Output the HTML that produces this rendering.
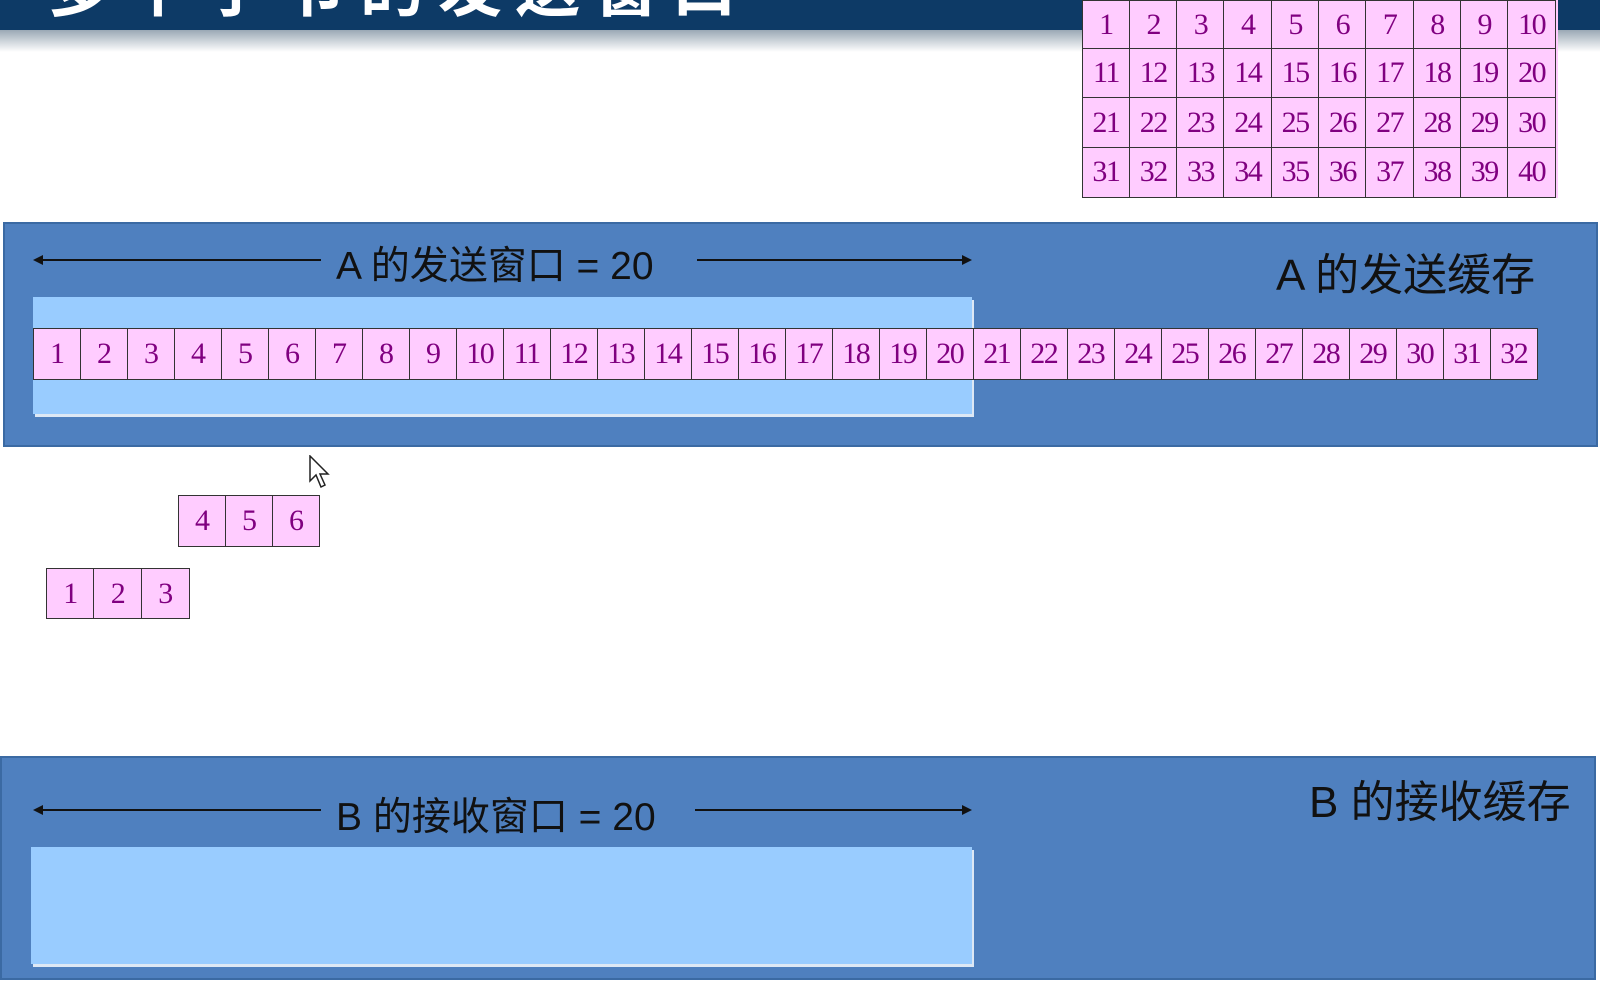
<!DOCTYPE html>
<html><head><meta charset="utf-8"><style>
*{margin:0;padding:0;box-sizing:border-box}
body{width:1600px;height:998px;overflow:hidden;background:#fff;position:relative;font-family:"Liberation Sans","Noto Sans CJK SC",sans-serif}
.abs{position:absolute}
.title{left:0;top:0;width:1600px;height:30px;background:#0d3a66;overflow:hidden}
.shade{left:0;top:30px;width:1600px;height:22px;background:linear-gradient(#9aa8b5,#fff)}
.tt{left:48px;top:-62px;color:#fff;font-size:64px;font-weight:bold;letter-spacing:14px;font-family:"Noto Sans CJK SC",sans-serif;white-space:nowrap}
.cells{display:flex;position:absolute}
.c{background:#ffccff;border:1.5px solid #333;margin-left:-1.5px;color:#800080;font-family:"Liberation Serif",serif;font-size:30px;display:flex;align-items:center;justify-content:center;letter-spacing:-1.5px}
.panel{background:#4f80bf;border:2px solid #3b6aa3}
.lb{background:#99ccff;box-shadow:2px 3px 0 #dde8f5}
.lbl{font-size:39px;color:#111;white-space:nowrap}
.lbl2{font-size:44px;color:#111;white-space:nowrap}
.line{height:2px;background:#111}
</style></head><body>
<div class="abs title"><div class="abs tt">多个字节的发送窗口</div></div><div class="abs shade"></div>

<div id="grid" class="abs" style="left:1083px;top:0px;width:475px;background:#ffccff"></div>

<div class="abs panel" style="left:3px;top:222px;width:1595px;height:225px"></div>
<div class="abs lb" style="left:33px;top:297px;width:939px;height:117px"></div>
<div class="abs line" style="left:36px;top:259px;width:285px"></div>
<div class="abs" style="left:33px;top:255px;border-right:10px solid #111;border-top:5px solid transparent;border-bottom:5px solid transparent"></div>
<div class="abs line" style="left:697px;top:259px;width:270px"></div>
<div class="abs" style="left:962px;top:255px;border-left:10px solid #111;border-top:5px solid transparent;border-bottom:5px solid transparent"></div>
<div class="abs lbl" style="left:336px;top:235px">A 的发送窗口 = 20</div>
<div class="abs lbl2" style="left:1276px;top:239px">A 的发送缓存</div>
<div id="row" class="cells" style="left:34px;top:328px"></div>

<div id="r456" class="cells" style="left:179px;top:495px"></div>
<div id="r123" class="cells" style="left:47px;top:568px"></div>
<svg class="abs" style="left:309px;top:455px" width="24" height="36" viewBox="0 0 24 36"><path d="M1 1 L1 26 L7 20 L12 32 L16 30 L11 19 L19 19 Z" fill="#fff" stroke="#222" stroke-width="1.5"/></svg>

<div class="abs panel" style="left:0px;top:756px;width:1596px;height:224px"></div>
<div class="abs lb" style="left:31px;top:847px;width:941px;height:117px"></div>
<div class="abs line" style="left:36px;top:809px;width:285px"></div>
<div class="abs" style="left:33px;top:805px;border-right:10px solid #111;border-top:5px solid transparent;border-bottom:5px solid transparent"></div>
<div class="abs line" style="left:695px;top:809px;width:272px"></div>
<div class="abs" style="left:962px;top:805px;border-left:10px solid #111;border-top:5px solid transparent;border-bottom:5px solid transparent"></div>
<div class="abs lbl" style="left:336px;top:786px">B 的接收窗口 = 20</div>
<div class="abs lbl2" style="left:1309px;top:766px">B 的接收缓存</div>

<script>
function mk(el,from,to,w,h){for(let i=from;i<=to;i++){const d=document.createElement('div');d.className='c';d.style.width=w+'px';d.style.height=h+'px';d.textContent=i;el.appendChild(d);}}
mk(document.getElementById('row'),1,32,48.5,52);
mk(document.getElementById('r456'),4,6,48.5,52);
mk(document.getElementById('r123'),1,3,49,51);
const g=document.getElementById('grid');
for(let r=0;r<4;r++){const d=document.createElement('div');d.className='cells';d.style.position='relative';d.style.marginTop=r?'-1.5px':'0';mk(d,r*10+1,r*10+10,48.8,r==0?49:51);g.appendChild(d);}
</script>
</body></html>
